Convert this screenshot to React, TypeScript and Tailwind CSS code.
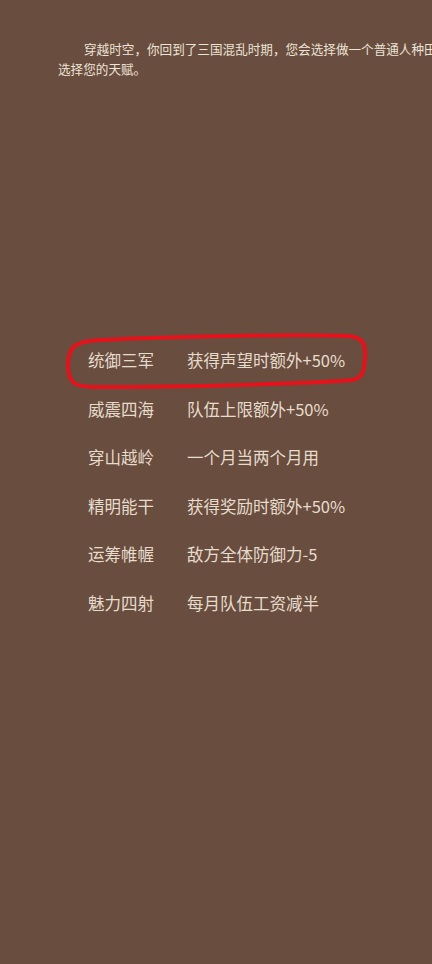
const BG = '#694d3f';

const talents = [
  { name: '统御三军', desc: '获得声望时额外+50%' },
  { name: '威震四海', desc: '队伍上限额外+50%' },
  { name: '穿山越岭', desc: '一个月当两个月用' },
  { name: '精明能干', desc: '获得奖励时额外+50%' },
  { name: '运筹帷幄', desc: '敌方全体防御力-5' },
  { name: '魅力四射', desc: '每月队伍工资减半' },
];

function Circle() {
  return (
    <svg
      className="pointer-events-none absolute left-[-24px] top-[-3px]"
      width="304"
      height="58"
      viewBox="0 0 304 58"
      fill="none"
    >
      <path
        d="M 38 7 C 120 3, 240 1, 284 3 C 300 4, 302 12, 301 26 C 300 40, 298 45, 288 47 C 240 51, 120 54, 32 54 C 10 54, 4 50, 4 32 C 4 14, 10 8, 38 7 Z"
        stroke="#e5121c"
        strokeWidth="4"
      />
    </svg>
  );
}

export default function App() {
  return (
    <div
      className="h-[964px] w-[432px] overflow-hidden text-[#e6dccc]"
      style={{ backgroundColor: BG, fontFamily: '"Noto Sans CJK SC", "Noto Sans", sans-serif' }}
    >
      <p className="whitespace-nowrap pl-[58px] pt-[39px] text-[12.6px] leading-[20px] indent-[26px] text-[#ece4d6]">
        穿越时空，你回到了三国混乱时期，您会选择做一个普通人种田，还是成为一方霸主？请
        <br />
        选择您的天赋。
      </p>

      <div className="mt-[257px] flex flex-col pl-[88px] text-[16.5px]">
        {talents.map((t, i) => (
          <div key={t.name} className="relative flex h-[48.6px] items-center">
            {i === 0 && <Circle />}
            <span className="w-[99px] shrink-0">{t.name}</span>
            <span>{t.desc}</span>
          </div>
        ))}
      </div>
    </div>
  );
}
